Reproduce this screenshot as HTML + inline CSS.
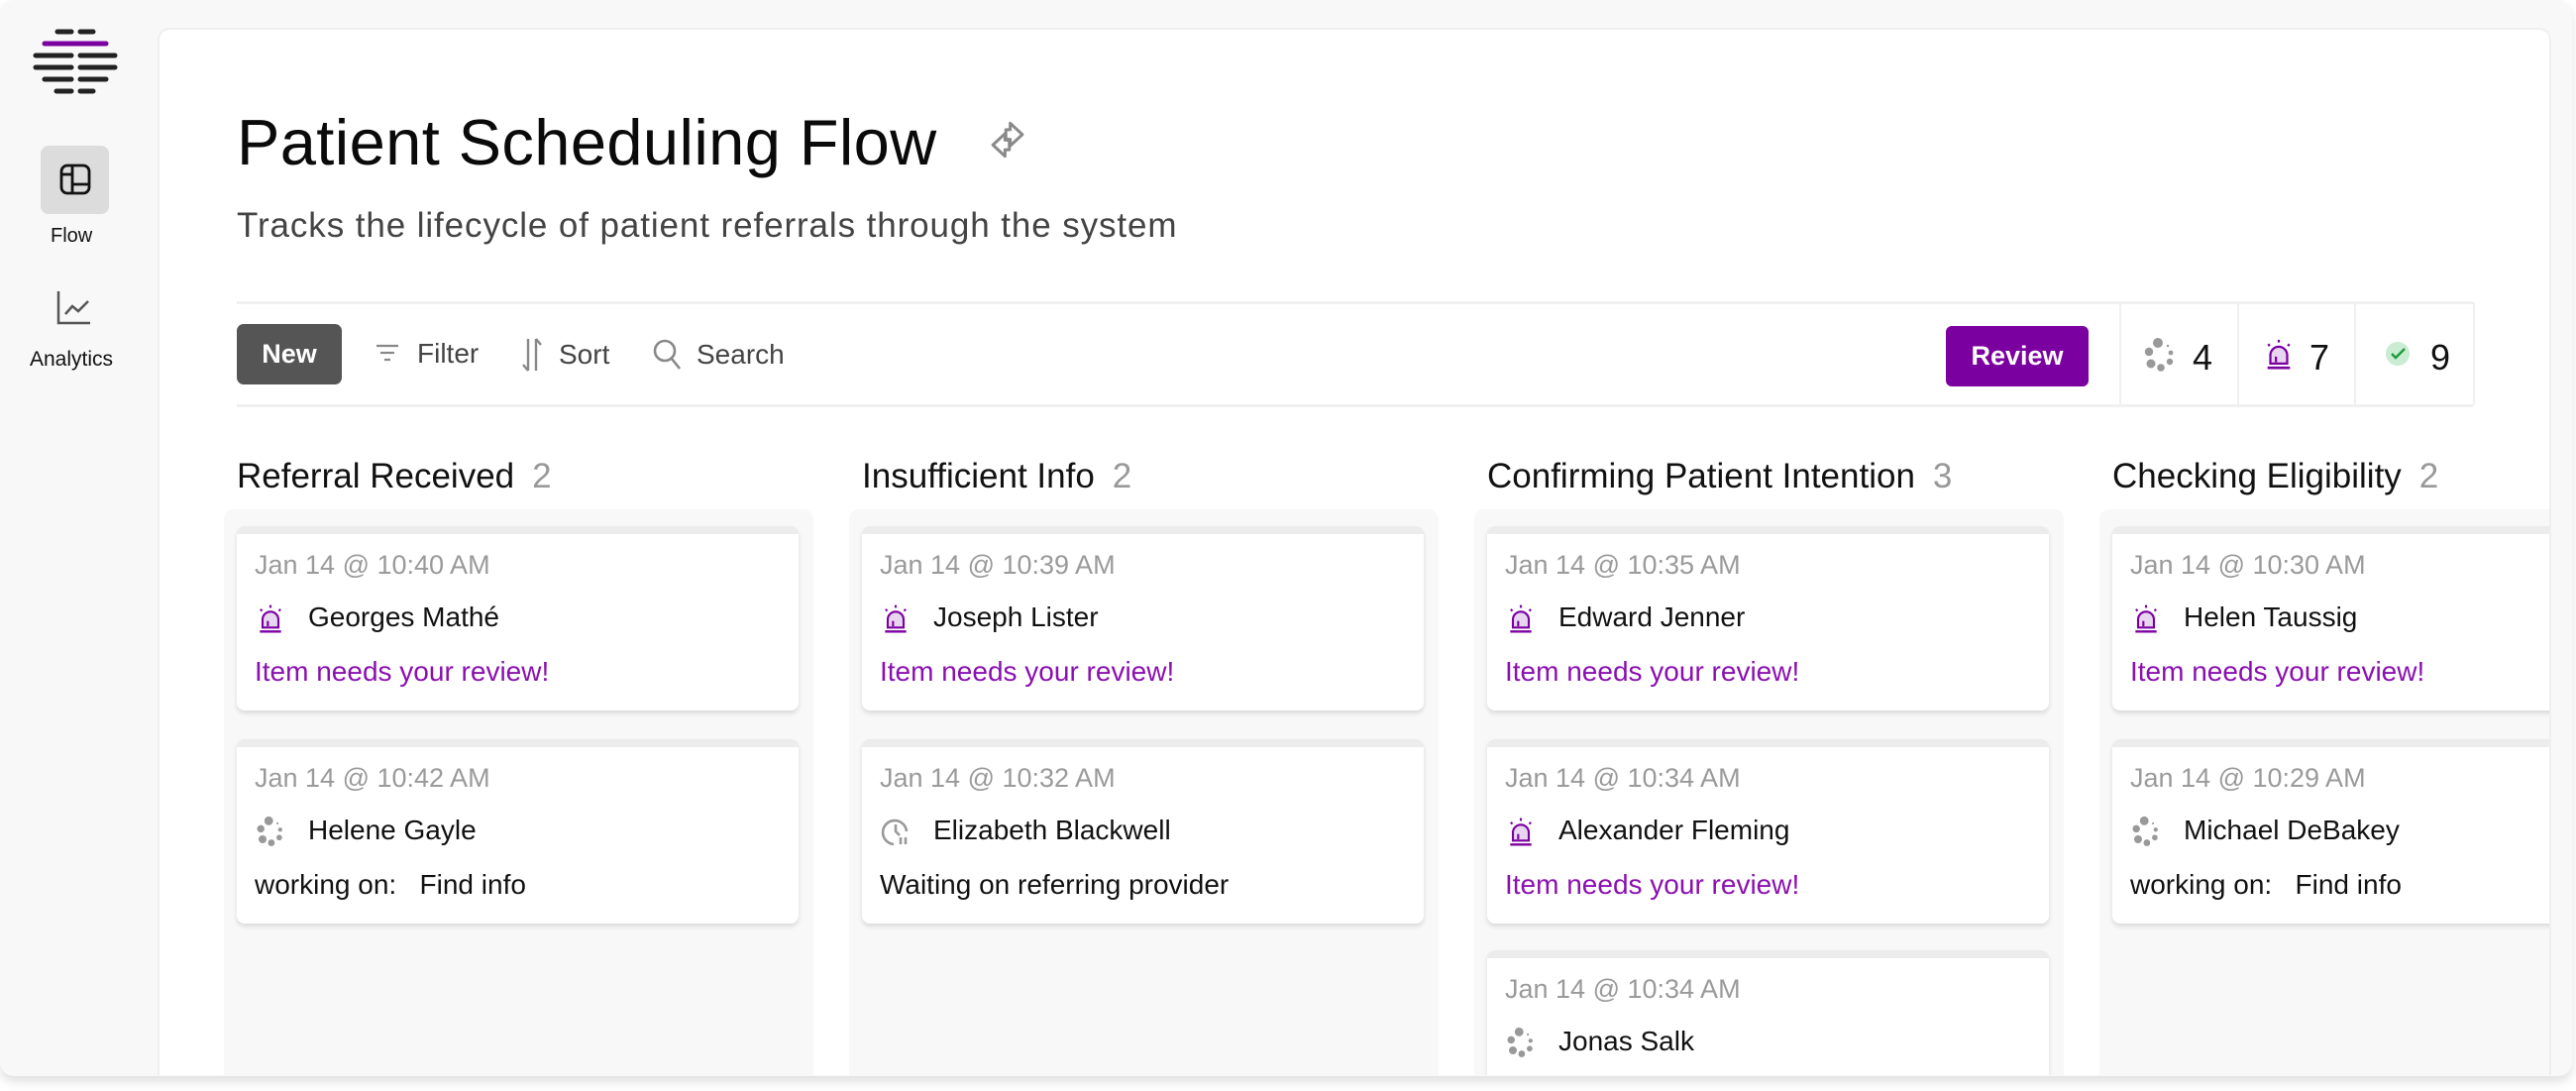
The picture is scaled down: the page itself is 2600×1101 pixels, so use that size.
<!DOCTYPE html>
<html><head><meta charset="utf-8"><style>
*{margin:0;padding:0;box-sizing:border-box}
body{width:2600px;height:1101px;background:#fff;font-family:"Liberation Sans",sans-serif;position:relative;overflow:hidden}
.abs{position:absolute}
.frame{position:absolute;left:0;top:0;width:2596px;height:1086px;background:#f8f8f8;border-radius:14px;box-shadow:0 6px 10px rgba(0,0,0,.12)}
.main{position:absolute;left:159px;top:28px;width:2416px;height:1057px;background:#fff;border-radius:12px 12px 0 0;border:2px solid #efefef;border-bottom:none;overflow:hidden}
.t{position:absolute;white-space:nowrap;line-height:40px}
.col{position:absolute;top:484px;width:595px;height:600px;background:#f8f8f8;border-radius:10px}
.card{position:absolute;left:13px;width:567px;height:186px;background:#fff;border-radius:8px;border-top:8px solid #ececec;box-shadow:0 3px 5px rgba(0,0,0,.12)}
.date{position:absolute;left:18px;top:11px;font-size:27px;color:#9a9a9a;line-height:40px;white-space:nowrap}
.nm{position:absolute;left:72px;top:64px;font-size:28px;color:#111;line-height:40px;white-space:nowrap}
.ic{position:absolute;left:18px;top:69px;width:32px;height:32px}
.msg{position:absolute;left:18px;top:119px;font-size:28px;line-height:40px;white-space:nowrap;color:#111}
.pur{color:#8a10b0}
.hd{position:absolute;top:459px;font-size:35px;color:#111;line-height:40px;white-space:nowrap}
.hd span{color:#999;margin-left:18px}
</style></head><body>
<div class="frame"></div>
<svg class="abs" style="left:30px;top:26px" width="92" height="72" viewBox="0 0 92 72" stroke-linecap="round" stroke-width="5">
<g stroke="#222"><line x1="28" y1="6" x2="42" y2="6"/><line x1="51" y1="6" x2="64" y2="6"/>
<line x1="6" y1="30" x2="42" y2="30"/><line x1="51" y1="30" x2="86" y2="30"/>
<line x1="6" y1="42" x2="42" y2="42"/><line x1="51" y1="42" x2="86" y2="42"/>
<line x1="15" y1="54" x2="42" y2="54"/><line x1="51" y1="54" x2="77" y2="54"/>
<line x1="27" y1="66" x2="42" y2="66"/><line x1="51" y1="66" x2="64" y2="66"/></g>
<line x1="15" y1="18" x2="77" y2="18" stroke="#7b00a0"/></svg>
<div class="abs" style="left:41px;top:147px;width:69px;height:69px;background:#dcdcdc;border-radius:8px"></div>
<svg class="abs" style="left:59px;top:164px" width="34" height="34" viewBox="0 0 34 34" fill="none" stroke="#111" stroke-width="2.8"><rect x="3" y="3" width="28" height="28" rx="6"/><line x1="14" y1="3" x2="14" y2="31"/><line x1="3" y1="12" x2="14" y2="12"/><line x1="14" y1="22" x2="31" y2="22"/></svg>
<div class="t" style="left:51px;top:218px;font-size:20px;color:#111">Flow</div>
<svg class="abs" style="left:57px;top:293px" width="36" height="36" viewBox="0 0 36 36" fill="none" stroke="#555" stroke-width="2.5"><path d="M2 1 V33 H34"/><path d="M9 24 L16 16 L22 21 L32 11"/></svg>
<div class="t" style="left:30px;top:343px;font-size:21px;color:#111">Analytics</div>

<div class="main">
<div style="position:absolute;left:-159px;top:-28px;width:2600px;height:1101px">
<div class="t" style="left:237px;top:109px;font-size:65px;line-height:66px;color:#0a0a0a;letter-spacing:0.4px">Patient Scheduling Flow</div>
<svg class="abs" style="left:994px;top:118px" width="42" height="42" viewBox="0 0 24 24" fill="none" stroke="#8a8a8a" stroke-width="1.7" stroke-linejoin="round"><path d="M13.5 2.5 L20.5 9 L13.5 15.5 L13.5 11.8 L11 11.8 L11 6.2 L13.5 6.2 Z"/><path d="M10.5 8.5 L3.5 15 L10.5 21.5 L10.5 17.8 L13 17.8 L13 12.2 L10.5 12.2 Z"/></svg>
<div class="t" style="left:237px;top:206px;font-size:35px;color:#444;letter-spacing:0.9px">Tracks the lifecycle of patient referrals through the system</div>
<div class="abs" style="left:237px;top:302px;width:2257px;height:3px;background:#f0f0f0"></div>
<div class="abs" style="left:237px;top:406px;width:2257px;height:3px;background:#f0f0f0"></div>
<div class="abs" style="left:237px;top:325px;width:106px;height:61px;background:#555;border-radius:7px;color:#fff;font-size:27px;font-weight:bold;text-align:center;line-height:61px">New</div>
<svg class="abs" style="left:376px;top:342px" width="26" height="26" viewBox="0 0 26 26" stroke="#888" stroke-width="2.2"><line x1="2" y1="5" x2="24" y2="5"/><line x1="6" y1="12" x2="20" y2="12"/><line x1="10" y1="19" x2="16" y2="19"/></svg>
<div class="t" style="left:419px;top:335px;font-size:28px;color:#444">Filter</div>
<svg class="abs" style="left:524px;top:338px" width="22" height="36" viewBox="0 0 22 36" fill="none" stroke="#888" stroke-width="2.4"><path d="M7 2 V34 M7 34 L2 28"/><path d="M15 34 V2 M15 2 L20 8"/></svg>
<div class="t" style="left:562px;top:336px;font-size:28px;color:#444">Sort</div>
<svg class="abs" style="left:656px;top:338px" width="32" height="36" viewBox="0 0 32 36" fill="none" stroke="#888" stroke-width="2.6"><circle cx="13" cy="14" r="10"/><line x1="20" y1="22" x2="28" y2="32"/></svg>
<div class="t" style="left:701px;top:336px;font-size:28px;color:#444">Search</div>

<div class="abs" style="left:1962px;top:327px;width:144px;height:61px;background:#7b00a0;border-radius:6px;color:#fff;font-size:27px;font-weight:bold;text-align:center;line-height:61px">Review</div>
<div class="abs" style="left:2137px;top:303px;width:2px;height:104px;background:#f0f0f0"></div>
<div class="abs" style="left:2256px;top:303px;width:2px;height:104px;background:#f0f0f0"></div>
<div class="abs" style="left:2374px;top:303px;width:2px;height:104px;background:#f0f0f0"></div>
<div class="abs" style="left:2494px;top:303px;width:2px;height:104px;background:#f0f0f0"></div>
<svg class="abs" style="left:2160px;top:337px" width="36" height="38" viewBox="0 0 36 36" fill="#999"><circle cx="16" cy="6" r="5"/><circle cx="7" cy="15" r="4.2"/><circle cx="9" cy="27" r="4.5"/><circle cx="19" cy="31" r="3.8"/><circle cx="28" cy="25" r="3.2"/><circle cx="29" cy="16" r="2.4"/><circle cx="26" cy="9" r="1.2"/></svg>
<div class="t" style="left:2211px;top:339px;font-size:36px;color:#111">4</div>
<svg class="abs" style="left:2281px;top:338px" width="34" height="34" viewBox="0 0 24 24" fill="none" stroke="#7b00a0" stroke-width="1.6"><path d="M6 19 V13 a6 6 0 0 1 12 0 V19 Z" fill="#e8d6f0"/><path d="M10 18 V14"/><path d="M4 22 H20" stroke-width="1.8"/><path d="M12 2 V4 M4.5 5 L5.5 6.5 M19.5 5 L18.5 6.5"/></svg>
<div class="t" style="left:2329px;top:339px;font-size:36px;color:#111">7</div>
<svg class="abs" style="left:2405px;top:342px" width="26" height="26" viewBox="0 0 26 26"><circle cx="13" cy="13" r="12" fill="#c9ecd2"/><path d="M7 13 L11 17 L20 8" fill="none" stroke="#1e9a3c" stroke-width="2.4"/></svg>
<div class="t" style="left:2451px;top:339px;font-size:36px;color:#111">9</div>

<div class="hd" style="left:237px">Referral Received<span>2</span></div>
<div class="hd" style="left:868px">Insufficient Info<span>2</span></div>
<div class="hd" style="left:1499px">Confirming Patient Intention<span>3</span></div>
<div class="hd" style="left:2130px">Checking Eligibility<span>2</span></div>
</div>

<div class="col" style="left:65px">
 <div class="card" style="top:17px"><div class="date">Jan 14 @ 10:40 AM</div><svg class="ic" viewBox="0 0 24 24" fill="none" stroke="#7b00a0" stroke-width="1.6"><path d="M6 19 V13 a6 6 0 0 1 12 0 V19 Z" fill="#e8d6f0"/><path d="M10 18 V14"/><path d="M4 22 H20" stroke-width="1.8"/><path d="M12 2 V4 M4.5 5 L5.5 6.5 M19.5 5 L18.5 6.5"/></svg><div class="nm">Georges Mathé</div><div class="msg pur">Item needs your review!</div></div>
 <div class="card" style="top:232px"><div class="date">Jan 14 @ 10:42 AM</div><svg class="ic" viewBox="0 0 36 36" fill="#999"><circle cx="16" cy="6" r="5"/><circle cx="7" cy="15" r="4.2"/><circle cx="9" cy="27" r="4.5"/><circle cx="19" cy="31" r="3.8"/><circle cx="28" cy="25" r="3.2"/><circle cx="29" cy="16" r="2.4"/><circle cx="26" cy="9" r="1.2"/></svg><div class="nm">Helene Gayle</div><div class="msg">working on:&nbsp;&nbsp; Find info</div></div>
</div>
<div class="col" style="left:696px">
 <div class="card" style="top:17px"><div class="date">Jan 14 @ 10:39 AM</div><svg class="ic" viewBox="0 0 24 24" fill="none" stroke="#7b00a0" stroke-width="1.6"><path d="M6 19 V13 a6 6 0 0 1 12 0 V19 Z" fill="#e8d6f0"/><path d="M10 18 V14"/><path d="M4 22 H20" stroke-width="1.8"/><path d="M12 2 V4 M4.5 5 L5.5 6.5 M19.5 5 L18.5 6.5"/></svg><div class="nm">Joseph Lister</div><div class="msg pur">Item needs your review!</div></div>
 <div class="card" style="top:232px"><div class="date">Jan 14 @ 10:32 AM</div><svg class="ic" viewBox="0 0 32 32" fill="none" stroke="#999" stroke-width="2.6"><path d="M14 29 A12 12 0 1 1 27 16"/><path d="M16 9 V16 L20 20"/><path d="M21 22 V29 M26 22 V29"/></svg><div class="nm">Elizabeth Blackwell</div><div class="msg">Waiting on referring provider</div></div>
</div>
<div class="col" style="left:1327px">
 <div class="card" style="top:17px"><div class="date">Jan 14 @ 10:35 AM</div><svg class="ic" viewBox="0 0 24 24" fill="none" stroke="#7b00a0" stroke-width="1.6"><path d="M6 19 V13 a6 6 0 0 1 12 0 V19 Z" fill="#e8d6f0"/><path d="M10 18 V14"/><path d="M4 22 H20" stroke-width="1.8"/><path d="M12 2 V4 M4.5 5 L5.5 6.5 M19.5 5 L18.5 6.5"/></svg><div class="nm">Edward Jenner</div><div class="msg pur">Item needs your review!</div></div>
 <div class="card" style="top:232px"><div class="date">Jan 14 @ 10:34 AM</div><svg class="ic" viewBox="0 0 24 24" fill="none" stroke="#7b00a0" stroke-width="1.6"><path d="M6 19 V13 a6 6 0 0 1 12 0 V19 Z" fill="#e8d6f0"/><path d="M10 18 V14"/><path d="M4 22 H20" stroke-width="1.8"/><path d="M12 2 V4 M4.5 5 L5.5 6.5 M19.5 5 L18.5 6.5"/></svg><div class="nm">Alexander Fleming</div><div class="msg pur">Item needs your review!</div></div>
 <div class="card" style="top:445px"><div class="date">Jan 14 @ 10:34 AM</div><svg class="ic" viewBox="0 0 36 36" fill="#999"><circle cx="16" cy="6" r="5"/><circle cx="7" cy="15" r="4.2"/><circle cx="9" cy="27" r="4.5"/><circle cx="19" cy="31" r="3.8"/><circle cx="28" cy="25" r="3.2"/><circle cx="29" cy="16" r="2.4"/><circle cx="26" cy="9" r="1.2"/></svg><div class="nm">Jonas Salk</div></div>
</div>
<div class="col" style="left:1958px">
 <div class="card" style="top:17px"><div class="date">Jan 14 @ 10:30 AM</div><svg class="ic" viewBox="0 0 24 24" fill="none" stroke="#7b00a0" stroke-width="1.6"><path d="M6 19 V13 a6 6 0 0 1 12 0 V19 Z" fill="#e8d6f0"/><path d="M10 18 V14"/><path d="M4 22 H20" stroke-width="1.8"/><path d="M12 2 V4 M4.5 5 L5.5 6.5 M19.5 5 L18.5 6.5"/></svg><div class="nm">Helen Taussig</div><div class="msg pur">Item needs your review!</div></div>
 <div class="card" style="top:232px"><div class="date">Jan 14 @ 10:29 AM</div><svg class="ic" viewBox="0 0 36 36" fill="#999"><circle cx="16" cy="6" r="5"/><circle cx="7" cy="15" r="4.2"/><circle cx="9" cy="27" r="4.5"/><circle cx="19" cy="31" r="3.8"/><circle cx="28" cy="25" r="3.2"/><circle cx="29" cy="16" r="2.4"/><circle cx="26" cy="9" r="1.2"/></svg><div class="nm">Michael DeBakey</div><div class="msg">working on:&nbsp;&nbsp; Find info</div></div>
</div>
</div>
</body></html>
